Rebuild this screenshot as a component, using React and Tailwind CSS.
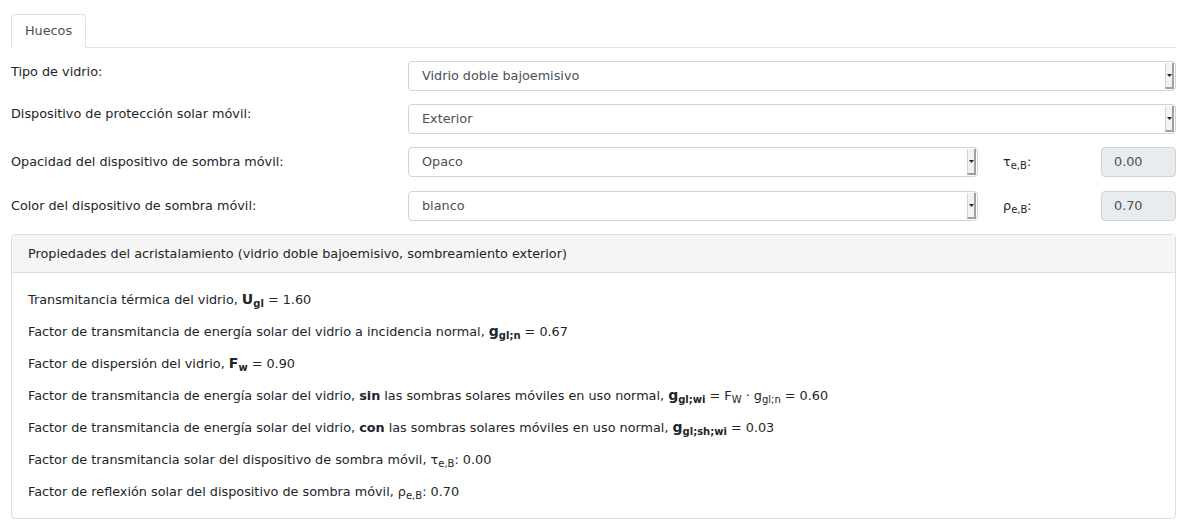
import React from "react";

const FONT = { fontFamily: '"DejaVu Sans", "Noto Sans", sans-serif' };

function Select({ value, className = "" }) {
  return (
    <div className={`flex h-[30px] items-stretch rounded-[4px] border border-[#ced4da] bg-white ${className}`}>
      <div className="flex flex-1 items-center pl-[13px] text-[12.8px] text-[#495057]">{value}</div>
      <div className="my-[1px] mr-[1px] flex w-[9px] items-center justify-center border-l border-[#d4d4d4] border-r-2 border-b-2 border-r-[#a0a0a0] border-b-[#a0a0a0] bg-[#f2f2f2]">
        <svg width="5" height="3" viewBox="0 0 5 3">
          <path d="M0 0h5L2.5 3z" fill="#222" />
        </svg>
      </div>
    </div>
  );
}

function Sym({ base, sub }) {
  return (
    <span>
      {base}
      <sub className="text-[10px] leading-none">{sub}</sub>
    </span>
  );
}

function ReadOnly({ value }) {
  return (
    <div className="flex h-[30px] w-[75px] items-center rounded-[4px] border border-[#ced4da] bg-[#e9ecef] pl-[12px] text-[12.8px] text-[#495057]">
      {value}
    </div>
  );
}

function BoldSym({ base, sub }) {
  return (
    <span className="font-bold">
      <span className="text-[14px] leading-none">{base}</span>
      <sub className="text-[10px] leading-none">{sub}</sub>
    </span>
  );
}

export default function App() {
  return (
    <div className="min-h-screen bg-white pl-[11px] pr-[9px] pt-[14px] text-[12.8px] text-[#212529]" style={FONT}>
      {/* tabs */}
      <div className="flex border-b border-[#dee2e6]">
        <div className="-mb-px flex h-[34px] w-[75px] items-center justify-center rounded-t-[4px] border border-[#dee2e6] border-b-white bg-white text-[#495057]">
          Huecos
        </div>
      </div>

      <div className="mt-[13px] flex items-start">
        <div className="w-[397px] pt-[1px] leading-[20px]">Tipo de vidrio:</div>
        <Select value="Vidrio doble bajoemisivo" className="flex-1" />
      </div>

      <div className="mt-[13px] flex items-start">
        <div className="w-[397px] leading-[20px]">Dispositivo de protección solar móvil:</div>
        <Select value="Exterior" className="flex-1" />
      </div>

      <div className="mt-[13px] flex items-center">
        <div className="w-[397px]">Opacidad del dispositivo de sombra móvil:</div>
        <Select value="Opaco" className="w-[570px]" />
        <div className="ml-[25px] flex-1">
          <Sym base="τ" sub="e,B" />:
        </div>
        <ReadOnly value="0.00" />
      </div>

      <div className="mt-[14px] flex items-center">
        <div className="w-[397px]">Color del dispositivo de sombra móvil:</div>
        <Select value="blanco" className="w-[570px]" />
        <div className="ml-[25px] flex-1">
          <Sym base="ρ" sub="e,B" />:
        </div>
        <ReadOnly value="0.70" />
      </div>

      <div className="mt-[13px] rounded-[4px] border border-[#dddddd]">
        <div className="flex h-[38px] items-center border-b border-[#dddddd] bg-[#f5f5f5] px-[16px]">
          Propiedades del acristalamiento (vidrio doble bajoemisivo, sombreamiento exterior)
        </div>
        <div className="flex flex-col gap-[12px] px-[16px] pb-[16px] pt-[17px] leading-[20px] [&>p]:h-[20px]">
          <p>
            Transmitancia térmica del vidrio, <BoldSym base="U" sub="gl" /> = 1.60
          </p>
          <p>
            Factor de transmitancia de energía solar del vidrio a incidencia normal, <BoldSym base="g" sub="gl;n" /> = 0.67
          </p>
          <p>
            Factor de dispersión del vidrio, <BoldSym base="F" sub="w" /> = 0.90
          </p>
          <p>
            Factor de transmitancia de energía solar del vidrio, <b>sin</b> las sombras solares móviles en uso normal,{" "}
            <BoldSym base="g" sub="gl;wi" /> = <Sym base="F" sub="W" /> · <Sym base="g" sub="gl;n" /> = 0.60
          </p>
          <p>
            Factor de transmitancia de energía solar del vidrio, <b>con</b> las sombras solares móviles en uso normal,{" "}
            <BoldSym base="g" sub="gl;sh;wi" /> = 0.03
          </p>
          <p>
            Factor de transmitancia solar del dispositivo de sombra móvil, <Sym base="τ" sub="e,B" />: 0.00
          </p>
          <p>
            Factor de reflexión solar del dispositivo de sombra móvil, <Sym base="ρ" sub="e,B" />: 0.70
          </p>
        </div>
      </div>
    </div>
  );
}
